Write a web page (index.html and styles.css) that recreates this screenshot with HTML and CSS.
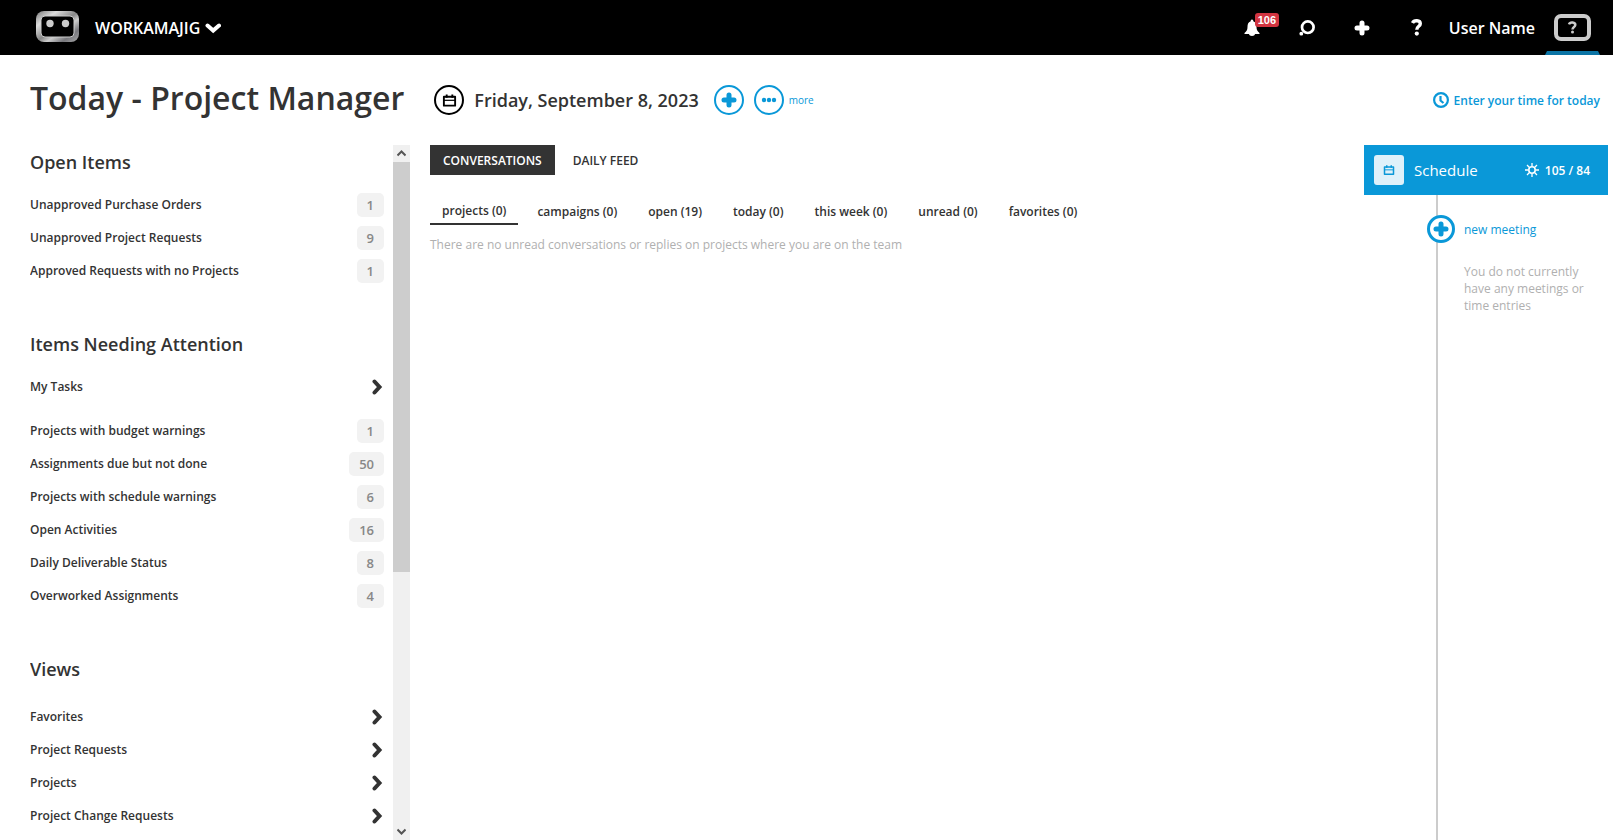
FILE: index.html
```
<!DOCTYPE html>
<html lang="en">
<head>
  <meta charset="UTF-8">
  <meta name="viewport" content="width=device-width, initial-scale=1.0">
  <title>Today - Project Manager</title>
  <link rel="stylesheet" href="styles.css">
</head>

<body>
  <!-- shared icon shapes -->
  <svg class="sprite" aria-hidden="true">
    <symbol id="plus" viewBox="0 0 16 16">
      <path d="M8 3V13M3 8H13" stroke="currentColor" stroke-width="5" stroke-linecap="round" />
    </symbol>
    <symbol id="chevron" viewBox="0 0 16 16">
      <path d="M6.500 2.500L11.500 8L6.500 13.500" fill="none" stroke="currentColor" stroke-width="4" stroke-linecap="round" />
    </symbol>
    <symbol id="calendar" viewBox="0 0 16 16">
      <path d="M2 4H14V13.500H2Z" fill="none" stroke="currentColor" stroke-width="2" stroke-linejoin="round" />
      <path d="M2 7.800H14" stroke="currentColor" stroke-width="1.300" />
      <path d="M5 1.500V5M11 1.500V5" stroke="currentColor" stroke-width="2" />
    </symbol>
  </svg>

  <header class="topbar">
    <a href="#" class="logo" aria-label="Home">
      <svg width="43" height="31" viewBox="0 0 43 31">
        <defs>
          <linearGradient id="metal" x1="0" y1="0" x2="1" y2="1">
            <stop offset="0" stop-color="#777" />
            <stop offset="0.250" stop-color="#ddd" />
            <stop offset="0.500" stop-color="#888" />
            <stop offset="0.620" stop-color="#ccc" />
            <stop offset="0.800" stop-color="#77777c" />
            <stop offset="1" stop-color="#aaa" />
          </linearGradient>
        </defs>
        <rect width="43" height="31" rx="8" fill="url(#metal)" />
        <rect x="5" y="5" width="33" height="21" rx="4" fill="#000" stroke="#ccc" />
        <circle cx="14" cy="12.500" r="3.700" fill="#ccc" />
        <circle cx="29.500" cy="12.500" r="3.700" fill="#ccc" />
      </svg>
    </a>
    <button type="button" class="company">
      WORKAMAJIG
      <svg width="16" height="12" viewBox="0 0 16 12"><path d="M2.500 3.500L8.200 8.500L14 3.500" fill="none" stroke="currentColor" stroke-width="4" stroke-linecap="round" /></svg>
    </button>
    <nav class="tools">
      <button type="button" class="tool" aria-label="Notifications">
        <svg width="16" height="18" viewBox="0 0 16 18"><path d="M8 0.500C9 0.500 9.300 1.300 9.300 2.200C12 3 12.500 5.500 12.500 8C12.500 11 13.500 12.500 15.500 14V15H0.500V14C2.500 12.500 3.500 11 3.500 8C3.500 5.500 4 3 6.700 2.200C6.700 1.300 7 0.500 8 0.500ZM5 15H11C11 17.500 5 17.500 5 15Z" fill="currentColor" /></svg>
        <span class="count">106</span>
      </button>
      <button type="button" class="tool" aria-label="Search">
        <svg width="16" height="16" viewBox="0 0 16 16"><circle cx="8.800" cy="7.200" r="5.800" fill="none" stroke="currentColor" stroke-width="2.700" /><circle cx="2.300" cy="13.700" r="1.900" fill="currentColor" /></svg>
      </button>
      <button type="button" class="tool" aria-label="Add">
        <svg width="16" height="16"><use href="#plus" /></svg>
      </button>
      <button type="button" class="tool" aria-label="Help">
        <svg width="12" height="17" viewBox="0 0 12 17"><path d="M1.500 4C3 0.800 9.300 1 9.300 4.700C9.300 7.500 5.800 7 5.800 10.800" fill="none" stroke="currentColor" stroke-width="3.400" /><circle cx="5.800" cy="14.600" r="2.100" fill="currentColor" /></svg>
      </button>
    </nav>
    <a href="#" class="user">User Name</a>
    <a href="#" class="avatar" aria-label="Profile">
      <svg width="37" height="27" viewBox="0 0 37 27">
        <rect x="2" y="2" width="33" height="23" rx="5" fill="#000" stroke="#ccc" stroke-width="4" />
        <path d="M15 10.300C16 7.500 21.500 8 21.300 11C21.100 13.100 18.500 12.800 18.500 15.500" fill="none" stroke="#ccc" stroke-width="2.500" />
        <circle cx="18.500" cy="18" r="1.500" fill="#ccc" />
      </svg>
    </a>
  </header>

  <div class="titlebar">
    <h1>Today - Project Manager</h1>
    <button type="button" class="round dark" aria-label="Pick a date">
      <svg width="15" height="15"><use href="#calendar" /></svg>
    </button>
    <span class="date">Friday, September 8, 2023</span>
    <button type="button" class="round" aria-label="Add">
      <svg width="16" height="16"><use href="#plus" /></svg>
    </button>
    <button type="button" class="round" id="more" aria-label="More options">
      <svg width="16" height="6" viewBox="0 0 16 6"><g fill="currentColor"><circle cx="3" cy="3" r="2.200" /><circle cx="8" cy="3" r="2.200" /><circle cx="13" cy="3" r="2.200" /></g></svg>
    </button>
    <label for="more" class="more">more</label>
    <a href="#" class="enter-time">
      <svg width="16" height="16" viewBox="0 0 16 16"><circle cx="8" cy="8" r="6.900" fill="none" stroke="currentColor" stroke-width="2.200" /><path d="M7.500 4V8.500L10.500 11" fill="none" stroke="currentColor" stroke-width="2.200" /></svg>
      Enter your time for today
    </a>
  </div>

  <div class="content">
    <aside class="sidebar">
      <div class="lists">
        <section>
          <h2>Open Items</h2>
          <a href="#" class="item">Unapproved Purchase Orders <span class="badge">1</span></a>
          <a href="#" class="item">Unapproved Project Requests <span class="badge">9</span></a>
          <a href="#" class="item">Approved Requests with no Projects <span class="badge">1</span></a>
        </section>
        <section>
          <h2>Items Needing Attention</h2>
          <a href="#" class="item tasks">My Tasks <svg width="16" height="16"><use href="#chevron" /></svg></a>
          <a href="#" class="item">Projects with budget warnings <span class="badge">1</span></a>
          <a href="#" class="item">Assignments due but not done <span class="badge">50</span></a>
          <a href="#" class="item">Projects with schedule warnings <span class="badge">6</span></a>
          <a href="#" class="item">Open Activities <span class="badge">16</span></a>
          <a href="#" class="item">Daily Deliverable Status <span class="badge">8</span></a>
          <a href="#" class="item">Overworked Assignments <span class="badge">4</span></a>
        </section>
        <section class="views">
          <h2>Views</h2>
          <a href="#" class="item">Favorites <svg width="16" height="16"><use href="#chevron" /></svg></a>
          <a href="#" class="item">Project Requests <svg width="16" height="16"><use href="#chevron" /></svg></a>
          <a href="#" class="item">Projects <svg width="16" height="16"><use href="#chevron" /></svg></a>
          <a href="#" class="item">Project Change Requests <svg width="16" height="16"><use href="#chevron" /></svg></a>
        </section>
      </div>
      <div class="scrollbar">
        <button type="button" aria-label="Scroll up"><svg width="9" height="7" viewBox="0 0 9 7"><path d="M0.500 5.500L4.500 1.500L8.500 5.500" fill="none" stroke="#555" stroke-width="2" /></svg></button>
        <div class="track"><div class="thumb"></div></div>
        <button type="button" aria-label="Scroll down"><svg width="9" height="7" viewBox="0 0 9 7"><path d="M0.500 1.500L4.500 5.500L8.500 1.500" fill="none" stroke="#555" stroke-width="2" /></svg></button>
      </div>
    </aside>

    <main class="feed">
      <div class="tabs">
        <button type="button" class="active">CONVERSATIONS</button>
        <button type="button">DAILY FEED</button>
      </div>
      <div class="filters">
        <button type="button" class="active">projects (0)</button>
        <button type="button">campaigns (0)</button>
        <button type="button">open (19)</button>
        <button type="button">today (0)</button>
        <button type="button">this week (0)</button>
        <button type="button">unread (0)</button>
        <button type="button">favorites (0)</button>
      </div>
      <p class="empty">There are no unread conversations or replies on projects where you are on the team</p>
    </main>

    <aside class="schedule">
      <div class="schedule-head">
        <span class="schedule-icon"><svg width="12" height="12"><use href="#calendar" /></svg></span>
        <h3>Schedule</h3>
        <svg width="14" height="14" viewBox="0 0 14 14"><g fill="none" stroke="currentColor"><circle cx="7" cy="7" r="3.200" stroke-width="1.600" /><path d="M7 0V3M7 11V14M0 7H3M11 7H14M2 2L4.200 4.200M9.800 9.800L12 12M2 12L4.200 9.800M9.800 4.200L12 2" stroke-width="1.300" /></g></svg>
        <span class="weather">105 / 84</span>
      </div>
      <div class="timeline">
        <button type="button" class="meeting">
          <span class="round"><svg width="16" height="16"><use href="#plus" /></svg></span>
          new meeting
        </button>
        <p class="empty">You do not currently have any meetings or time entries</p>
      </div>
    </aside>
  </div>
</body>
</html>
```
FILE: styles.css
```
* {
  box-sizing: border-box;
}
body {
  margin: 0;
  height: 100vh;
  display: flex;
  flex-direction: column;
  overflow: hidden;
  background-color: #fff;
  color: #333;
  font-family: "Open Sans", sans-serif;
  font-size: 12px;
  font-weight: 600;
}
h1, h2, h3, p {
  margin: 0;
  font-weight: 600;
}
a {
  color: inherit;
  text-decoration: none;
}
button {
  padding: 0;
  border: 0;
  background: none;
  color: inherit;
  font: inherit;
  cursor: pointer;
}
svg {
  display: block;
  flex: none;
}
.sprite {
  position: absolute;
  width: 0;
  height: 0;
}

/* top bar */
.topbar {
  flex: none;
  display: flex;
  align-items: center;
  height: 55px;
  padding: 0 13px 0 36px;
  background-color: #000;
  color: #fff;
  font-size: 16px;
}
.logo {
  padding-bottom: 2px;
}
.company {
  display: flex;
  align-items: center;
  gap: 5px;
  margin-left: 16px;
}
.tools {
  display: flex;
  margin-left: auto;
}
.tool {
  position: relative;
  display: flex;
  justify-content: center;
  align-items: center;
  width: 55px;
  height: 55px;
}
.count {
  position: absolute;
  top: 13px;
  left: 30px;
  padding: 0 3px;
  border-radius: 3px;
  background-color: #d23440;
  font: bold 11px/14px "Liberation Sans", sans-serif;
}
.user {
  margin-left: 4px;
}
.avatar {
  position: relative;
  display: flex;
  justify-content: center;
  align-items: center;
  width: 55px;
  height: 55px;
  margin-left: 10px;
}
.avatar::after {
  content: "";
  position: absolute;
  bottom: 0;
  left: 0;
  width: 100%;
  height: 4px;
  background-color: #0b74a5;
  clip-path: polygon(2px 0, 53px 0, 100% 100%, 0 100%);
}

/* page title */
.titlebar {
  flex: none;
  display: flex;
  align-items: center;
  height: 90px;
  padding: 0 13px 0 30px;
}
h1 {
  margin-right: 30px;
  padding-bottom: 5px;
  font-size: 32px;
}
.round {
  flex: none;
  display: flex;
  justify-content: center;
  align-items: center;
  width: 30px;
  height: 30px;
  border: 2px solid #0a98d8;
  border-radius: 50%;
  color: #0a98d8;
}
.round.dark {
  border-color: #000;
  color: #000;
}
.date {
  margin: 0 15px 0 10px;
  font-size: 18px;
}
#more {
  margin: 0 5px 0 10px;
}
.more {
  color: #0a98d8;
  font-size: 10px;
  font-weight: 400;
}
.enter-time {
  display: flex;
  align-items: center;
  gap: 5px;
  margin-left: auto;
  color: #0a98d8;
}

.content {
  flex: 1;
  display: flex;
  min-height: 0;
}

/* left column */
.sidebar {
  flex: none;
  display: flex;
  gap: 9px;
  width: 410px;
  padding-left: 30px;
}
.lists {
  flex: 1;
  overflow: hidden;
}
.lists section {
  margin-bottom: 40px;
}
h2 {
  margin-bottom: 9px;
  font-size: 18px;
  line-height: 34px;
}
.views h2 {
  margin-bottom: 14px;
}
.item {
  display: flex;
  justify-content: space-between;
  align-items: center;
  height: 33px;
}
.tasks {
  margin-bottom: 11px;
}
.badge {
  padding: 0 10px;
  border-radius: 5px;
  background-color: #f2f2f2;
  color: #888;
  font-size: 13px;
  line-height: 24px;
}
.scrollbar {
  display: flex;
  flex-direction: column;
  width: 17px;
  background-color: #f0f0f0;
}
.scrollbar button {
  display: flex;
  justify-content: center;
  align-items: center;
  height: 17px;
}
.track {
  flex: 1;
}
.thumb {
  height: 62%;
  background-color: #cdcdcd;
}

/* middle column */
.feed {
  flex: 1;
  padding-left: 20px;
}
.tabs {
  display: flex;
  gap: 5px;
}
.tabs button {
  height: 30px;
  padding: 0 13px;
}
.tabs .active {
  background-color: #333;
  color: #fff;
}
.filters {
  display: flex;
  gap: 7px;
  margin-top: 20px;
}
.filters button {
  height: 30px;
  padding: 2px 12px 0;
}
.filters .active {
  border-bottom: 2px solid #333;
}
.empty {
  color: #b0b0b0;
  font-weight: 400;
  line-height: 17px;
}
.feed .empty {
  margin-top: 11px;
}

/* right column */
.schedule {
  flex: none;
  display: flex;
  flex-direction: column;
  width: 244px;
  margin-right: 5px;
}
.schedule-head {
  display: flex;
  align-items: center;
  height: 50px;
  padding: 0 18px 0 10px;
  background-color: #0a98d8;
  color: #fff;
}
.schedule-icon {
  display: flex;
  justify-content: center;
  align-items: center;
  width: 30px;
  height: 30px;
  border-radius: 3px;
  background-color: #dff1fa;
  color: #0a98d8;
}
h3 {
  margin: 0 auto 0 10px;
  font-size: 15px;
  font-weight: 400;
}
.weather {
  margin-left: 6px;
}
.timeline {
  flex: 1;
  margin-left: 72px;
  padding: 20px 20px 0 0;
  border-left: 2px solid #ccc;
}
.meeting {
  display: flex;
  align-items: center;
  gap: 9px;
  margin-left: -11px;
  color: #0a98d8;
  font-weight: 400;
}
.meeting .round {
  width: 28px;
  height: 28px;
  border-width: 3px;
  background-color: #fff;
}
.timeline .empty {
  margin: 20px 0 0 26px;
}
```
